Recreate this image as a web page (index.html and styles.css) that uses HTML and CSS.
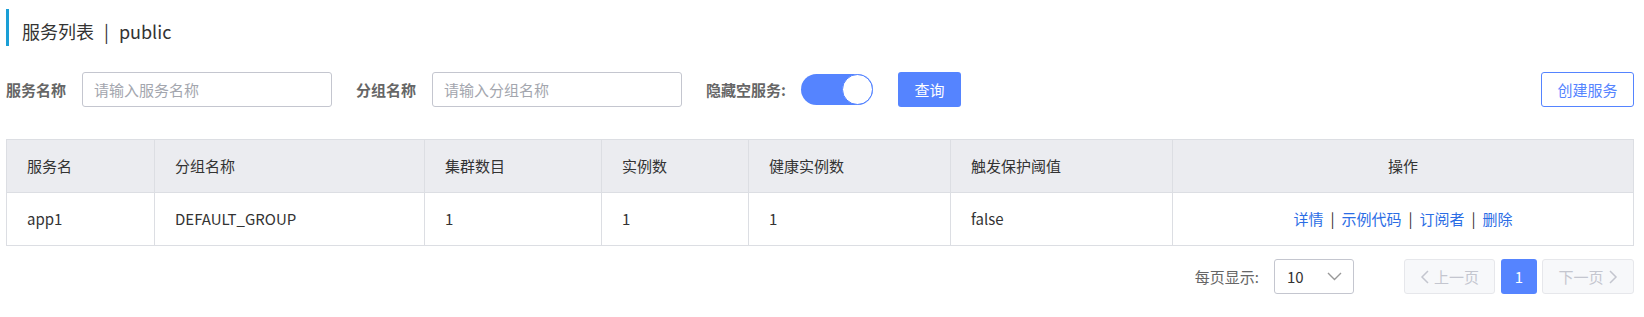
FILE: index.html
```html
<!DOCTYPE html>
<html lang="zh-CN">
<head>
    <meta charset="UTF-8">
    <title>服务列表</title>
    <link rel="stylesheet" href="styles.css">
</head>
<body>
<div class="page">
    <h1 class="page-title">服务列表<span class="title-sep">|</span>public</h1>

    <div class="filter-bar">
        <label class="filter-label">服务名称</label>
        <input class="filter-input" type="text" placeholder="请输入服务名称">
        <label class="filter-label second">分组名称</label>
        <input class="filter-input" type="text" placeholder="请输入分组名称">
        <label class="filter-label third">隐藏空服务:</label>
        <span class="switch"><span class="switch-knob"></span></span>
        <button class="btn btn-primary">查询</button>
        <button class="btn btn-outline">创建服务</button>
    </div>

    <table class="service-table">
        <colgroup>
            <col style="width:148px">
            <col style="width:270px">
            <col style="width:177px">
            <col style="width:147px">
            <col style="width:202px">
            <col style="width:222px">
            <col>
        </colgroup>
        <thead>
        <tr>
            <th>服务名</th>
            <th>分组名称</th>
            <th>集群数目</th>
            <th>实例数</th>
            <th>健康实例数</th>
            <th>触发保护阈值</th>
            <th class="center">操作</th>
        </tr>
        </thead>
        <tbody>
        <tr>
            <td>app1</td>
            <td>DEFAULT_GROUP</td>
            <td>1</td>
            <td>1</td>
            <td>1</td>
            <td>false</td>
            <td class="center">
                <a href="#">详情</a><span class="op-sep">|</span><a href="#">示例代码</a><span class="op-sep">|</span><a href="#">订阅者</a><span class="op-sep">|</span><a href="#">删除</a>
            </td>
        </tr>
        </tbody>
    </table>

    <div class="pagination">
        <span class="page-size-label">每页显示:</span>
        <div class="page-size">
            <span>10</span>
            <svg width="15" height="9" viewBox="0 0 15 9"><path d="M1 1l6.5 6.5L14 1" fill="none" stroke="#999" stroke-width="1.4"/></svg>
        </div>
        <div class="pager">
            <button class="pager-btn" disabled>
                <svg width="9" height="14" viewBox="0 0 9 14"><path d="M8 1L2 7l6 6" fill="none" stroke="#c4c6cf" stroke-width="1.5"/></svg>
                上一页
            </button>
            <button class="pager-num">1</button>
            <button class="pager-btn next" disabled>
                下一页
                <svg width="9" height="14" viewBox="0 0 9 14"><path d="M1 1l6 6-6 6" fill="none" stroke="#c4c6cf" stroke-width="1.5"/></svg>
            </button>
        </div>
    </div>
</div>
</body>
</html>
```

FILE: styles.css
```css
*{
    margin:0;padding:0;
    box-sizing: border-box;
}
body{
    font-family: "Noto Sans CJK SC", "Open Sans", sans-serif;
    font-size: 15px;
    color: #333;
    background: #fff;
}
.page{
    padding: 9px 10px 0 6px;
}
.page-title{
    height: 37px;
    border-left: 3px solid #1a9fd6;
    padding: 11px 0 0 13px;
    font-size: 18px;
    font-weight: normal;
    line-height: 22px;
    color: #333;
}
.title-sep{
    margin: 0 10px;
}
.filter-bar{
    display: flex;
    align-items: center;
    height: 35px;
    margin-top: 26px;
}
.filter-label{
    font-weight: bold;
    color: #666;
    line-height: 20px;
    margin-right: 16px;
}
.filter-label.second{
    margin-left: 24px;
}
.filter-label.third{
    margin-left: 24px;
    margin-right: 15px;
}
.filter-input{
    width: 250px;
    height: 35px;
    border: 1px solid #c4c6cf;
    border-radius: 3px;
    padding: 0 11px;
    font: inherit;
    color: #333;
    outline: none;
}
.filter-input::placeholder{
    color: #a3a6ae;
}
.switch{
    display: flex;
    justify-content: flex-end;
    width: 72px;
    height: 31px;
    border-radius: 16px;
    background: #5584ff;
}
.switch-knob{
    width: 31px;
    height: 31px;
    border-radius: 50%;
    background: #fff;
    border: 1px solid #5584ff;
}
.btn{
    height: 35px;
    border-radius: 3px;
    font: inherit;
    cursor: pointer;
}
.btn-primary{
    width: 63px;
    margin-left: 25px;
    border: none;
    background: #5584ff;
    color: #fff;
}
.btn-outline{
    width: 93px;
    margin-left: auto;
    border: 1px solid #5584ff;
    background: #fff;
    color: #5584ff;
}
.service-table{
    width: 100%;
    margin-top: 32px;
    border-collapse: collapse;
    table-layout: fixed;
}
.service-table th,
.service-table td{
    height: 53px;
    padding: 0 20px;
    border: 1px solid #dcdee3;
    text-align: left;
    font-weight: normal;
    line-height: 20px;
    color: #333;
}
.service-table th{
    background: #ebecf0;
}
.service-table .center{
    text-align: center;
}
.service-table a{
    color: #2b6de5;
    text-decoration: none;
}
.op-sep{
    margin: 0 7px;
    color: #333;
}
.pagination{
    display: flex;
    justify-content: flex-end;
    align-items: center;
    height: 35px;
    margin-top: 13px;
}
.page-size-label{
    color: #666;
    margin-right: 15px;
}
.page-size{
    display: flex;
    align-items: center;
    justify-content: space-between;
    width: 80px;
    height: 35px;
    padding: 0 11px 0 12px;
    border: 1px solid #c4c6cf;
    border-radius: 3px;
    color: #333;
}
.pager{
    display: flex;
    margin-left: 50px;
}
.pager-btn{
    display: flex;
    align-items: center;
    justify-content: center;
    gap: 5px;
    width: 91px;
    height: 35px;
    border: 1px solid #e6e7eb;
    border-radius: 3px;
    background: #f7f8fa;
    color: #c4c6cf;
    font: inherit;
}
.pager-btn.next{
    width: 92px;
}
.pager-num{
    width: 36px;
    height: 35px;
    margin: 0 5px 0 6px;
    border: none;
    border-radius: 3px;
    background: #5584ff;
    color: #fff;
    font: inherit;
}
```
